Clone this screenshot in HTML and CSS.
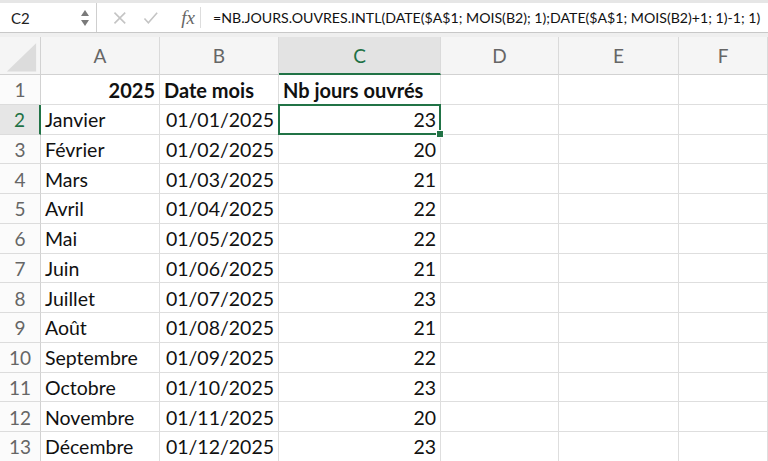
FILE: index.html
```html
<!DOCTYPE html>
<html lang="fr">
<head>
<meta charset="utf-8">
<link rel="stylesheet" href="styles.css">
</head>
<body>
<div class="formula-bar">
  <div class="namebox">
    <span class="ref">C2</span>
    <svg class="spin" width="10" height="20" viewBox="0 0 10 20"><path d="M1 8 L5 2 L9 8 Z" fill="#7a7a7a"/><path d="M1 12 L9 12 L5 18 Z" fill="#7a7a7a"/></svg>
  </div>
  <div class="tools">
    <svg class="ico" width="14" height="14" viewBox="0 0 14 14"><path d="M1.5 1.5 L12.5 12.5 M12.5 1.5 L1.5 12.5" stroke="#c4c4c4" stroke-width="1.6" fill="none"/></svg>
    <svg class="ico" width="16" height="14" viewBox="0 0 16 14"><path d="M1.5 7.5 L5.5 12 L14.5 1.5" stroke="#c4c4c4" stroke-width="1.6" fill="none"/></svg>
    <span class="fx">fx</span>
  </div>
  <div class="formula">=NB.JOURS.OUVRES.INTL(DATE($A$1; MOIS(B2); 1);DATE($A$1; MOIS(B2)+1; 1)-1; 1)</div>
</div>
<div class="band"></div>
<div class="sheet">
  <div class="hd corner"><svg width="41" height="38" viewBox="0 0 41 38"><path d="M7 35 L37 6 L37 35 Z" fill="#dcdcdc"/></svg></div>
  <div class="hd col">A</div>
  <div class="hd col">B</div>
  <div class="hd col active">C</div>
  <div class="hd col">D</div>
  <div class="hd col">E</div>
  <div class="hd col">F</div>

  <div class="rh">1</div><div class="c r b">2025</div><div class="c b">Date mois</div><div class="c b">Nb jours ouvrés</div><div class="c"></div><div class="c"></div><div class="c"></div>
  <div class="rh active">2</div><div class="c">Janvier</div><div class="c r">01/01/2025</div><div class="c r sel">23</div><div class="c"></div><div class="c"></div><div class="c"></div>
  <div class="rh">3</div><div class="c">Février</div><div class="c r">01/02/2025</div><div class="c r">20</div><div class="c"></div><div class="c"></div><div class="c"></div>
  <div class="rh">4</div><div class="c">Mars</div><div class="c r">01/03/2025</div><div class="c r">21</div><div class="c"></div><div class="c"></div><div class="c"></div>
  <div class="rh">5</div><div class="c">Avril</div><div class="c r">01/04/2025</div><div class="c r">22</div><div class="c"></div><div class="c"></div><div class="c"></div>
  <div class="rh">6</div><div class="c">Mai</div><div class="c r">01/05/2025</div><div class="c r">22</div><div class="c"></div><div class="c"></div><div class="c"></div>
  <div class="rh">7</div><div class="c">Juin</div><div class="c r">01/06/2025</div><div class="c r">21</div><div class="c"></div><div class="c"></div><div class="c"></div>
  <div class="rh">8</div><div class="c">Juillet</div><div class="c r">01/07/2025</div><div class="c r">23</div><div class="c"></div><div class="c"></div><div class="c"></div>
  <div class="rh">9</div><div class="c">Août</div><div class="c r">01/08/2025</div><div class="c r">21</div><div class="c"></div><div class="c"></div><div class="c"></div>
  <div class="rh">10</div><div class="c">Septembre</div><div class="c r">01/09/2025</div><div class="c r">22</div><div class="c"></div><div class="c"></div><div class="c"></div>
  <div class="rh">11</div><div class="c">Octobre</div><div class="c r">01/10/2025</div><div class="c r">23</div><div class="c"></div><div class="c"></div><div class="c"></div>
  <div class="rh">12</div><div class="c">Novembre</div><div class="c r">01/11/2025</div><div class="c r">20</div><div class="c"></div><div class="c"></div><div class="c"></div>
  <div class="rh">13</div><div class="c">Décembre</div><div class="c r">01/12/2025</div><div class="c r">23</div><div class="c"></div><div class="c"></div><div class="c"></div>
</div>
</body>
</html>
```

FILE: styles.css
```css
* { box-sizing: border-box; }
html, body { margin: 0; padding: 0; }
body {
  width: 768px;
  height: 461px;
  overflow: hidden;
  background: #ffffff;
  font-family: Lato, "Open Sans", sans-serif;
  color: #111;
}
.formula-bar {
  display: flex;
  align-items: stretch;
  height: 33px;
  border-top: 3px solid #e6e6e6;
  border-bottom: 1px solid #c8c8c8;
  background: #fff;
}
.namebox {
  width: 97px;
  display: flex;
  align-items: center;
  justify-content: space-between;
  padding: 0 6px 0 11px;
  border-right: 1px solid #cfcfcf;
}
.ref { font-size: 15px; color: #222; }
.spin { display: block; }
.tools {
  display: flex;
  align-items: center;
  gap: 16px;
  padding: 0 5px 0 16px;
  width: 104px;
  border-right: 1px solid #dddddd;
  margin: 4px 0;
}
.ico { display: block; }
.fx {
  font-family: "Liberation Serif", "DejaVu Serif", serif;
  font-style: italic;
  font-size: 19px;
  color: #666;
  margin-left: 7px;
}
.formula {
  flex: 1;
  display: flex;
  align-items: center;
  padding-left: 12px;
  font-size: 14.15px;
  color: #111;
  white-space: nowrap;
  overflow: hidden;
}
.band { height: 4px; background: #efefef; }
.sheet {
  display: grid;
  grid-template-columns: 41px 119px 119px 162px 118px 120px 89px;
  grid-template-rows: 38px repeat(13, 29.75px);
}
.hd {
  background: #f5f5f5;
  border-right: 1px solid #dadada;
  border-bottom: 1px solid #d2d2d2;
  display: flex;
  align-items: center;
  justify-content: center;
  font-size: 19px;
  color: #666;
}
.corner { padding: 0; border-right: 1px solid #d2d2d2; }
.corner svg { display: block; }
.hd.active {
  background: #e3e3e3;
  color: #1f7145;
  border-bottom: 2px solid #217346;
}
.rh {
  background: #fbfbfb;
  border-right: 1px solid #d2d2d2;
  border-bottom: 1px solid #dcdcdc;
  display: flex;
  align-items: center;
  justify-content: center;
  font-size: 19px;
  color: #666;
  padding-top: 1px;
}
.rh.active {
  background: #e6e6e6;
  color: #1f7145;
  border-right: 2px solid #217346;
}
.c {
  border-right: 1px solid #dedede;
  border-bottom: 1px solid #dedede;
  display: flex;
  align-items: center;
  padding: 1px 4px 0 4px;
  font-size: 19.5px;
  color: #111;
  white-space: nowrap;
}
.c.r { justify-content: flex-end; }
.c.b { font-weight: 700; font-size: 20px; }
.c.sel { position: relative; }
.c.sel::before {
  content: "";
  position: absolute;
  left: -1px;
  top: -1px;
  right: -1px;
  bottom: -1px;
  border: 2px solid #217346;
}
.c.sel::after {
  content: "";
  position: absolute;
  right: -4px;
  bottom: -4px;
  width: 6px;
  height: 6px;
  background: #217346;
  border: 1px solid #fff;
}
```
